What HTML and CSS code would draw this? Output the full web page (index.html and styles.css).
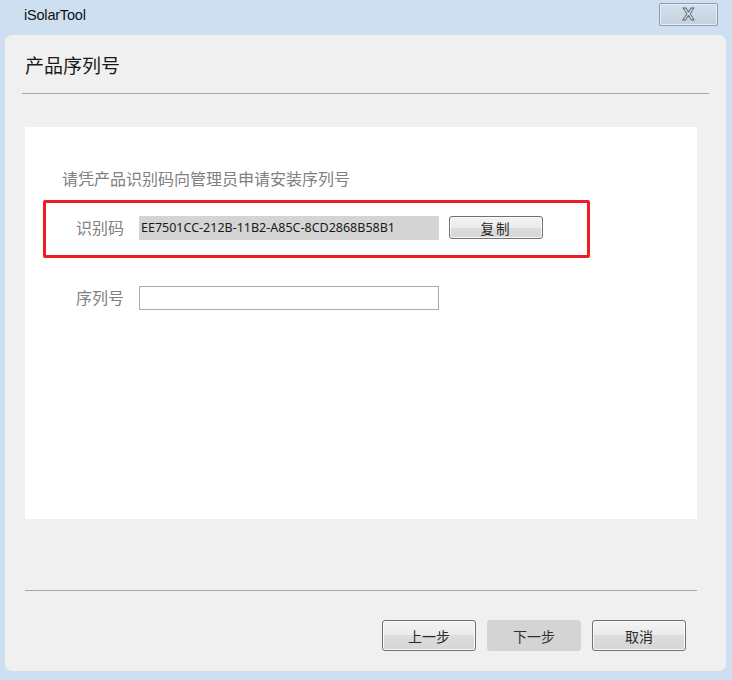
FILE: index.html
```html
<!DOCTYPE html>
<html lang="zh-CN">
<head>
<meta charset="utf-8">
<title>iSolarTool</title>
<link rel="stylesheet" href="styles.css">
</head>
<body>
<div class="window">
  <div class="titlebar">
    <span class="title">iSolarTool</span>
    <button class="close"><span>X</span></button>
  </div>
  <div class="panel">
    <div class="header">产品序列号</div>
    <div class="rule top-rule"></div>
    <div class="content">
      <div class="hint">请凭产品识别码向管理员申请安装序列号</div>
      <div class="highlight">
        <span class="label">识别码</span>
        <div class="field readonly">EE7501CC-212B-11B2-A85C-8CD2868B58B1</div>
        <button class="btn copy">复制</button>
      </div>
      <div class="row">
        <span class="label">序列号</span>
        <div class="field input"></div>
      </div>
    </div>
    <div class="rule bottom-rule"></div>
    <div class="actions">
      <button class="btn action">上一步</button>
      <button class="btn action disabled">下一步</button>
      <button class="btn action">取消</button>
    </div>
  </div>
</div>
</body>
</html>
```
FILE: styles.css
```css
html, body {
  margin: 0;
  padding: 0;
}
body {
  width: 732px;
  height: 680px;
  background: #cddff0;
  font-family: "Noto Sans CJK SC", "Noto Sans", sans-serif;
  overflow: hidden;
}
.window {
  width: 732px;
  height: 680px;
  display: flex;
  flex-direction: column;
}
.titlebar {
  height: 35px;
  display: flex;
  justify-content: space-between;
  align-items: flex-start;
  padding: 0 14px 0 24px;
  box-sizing: border-box;
}
.title {
  font-family: "Liberation Sans", sans-serif;
  font-size: 14.5px;
  line-height: 18px;
  letter-spacing: -0.2px;
  color: #111111;
  margin-top: 6px;
}
.close {
  margin-top: 3px;
  width: 59px;
  height: 23px;
  border: 1px solid #8d9cae;
  border-radius: 2px;
  background: linear-gradient(#d5e0ec, #c3d1e0);
  padding: 0;
  display: flex;
  align-items: center;
  justify-content: center;
  box-shadow: inset 0 0 0 1px #e4ecf5;
}
.close span {
  font-family: "Liberation Sans", sans-serif;
  font-size: 17px;
  font-weight: bold;
  color: #ffffff;
  -webkit-text-stroke: 1px #5d6670;
  line-height: 1;
}
.panel {
  margin: 0 6px 0 5px;
  height: 636px;
  background: #f0f0f0;
  border-radius: 7px;
  display: flex;
  flex-direction: column;
}
.header {
  height: 58px;
  box-sizing: border-box;
  padding: 16px 0 0 20px;
  font-size: 19px;
  line-height: 27px;
  color: #1a1a1a;
}
.rule {
  height: 1px;
  background: #a6a6a6;
}
.top-rule {
  margin: 0 17px;
}
.content {
  margin: 33px 29px 0 20px;
  height: 392px;
  background: #ffffff;
  box-sizing: border-box;
  padding-top: 40px;
}
.hint {
  padding-left: 37px;
  font-size: 16px;
  line-height: 22px;
  color: #808080;
}
.highlight {
  margin: 11px 0 0 18px;
  width: 547px;
  height: 58px;
  box-sizing: border-box;
  border: 3px solid #ee1c25;
  border-radius: 2px;
  display: flex;
  align-items: flex-start;
  padding: 13px 0 0 30px;
}
.label {
  width: 63px;
  font-size: 16px;
  line-height: 22px;
  color: #808080;
  flex: none;
}
.field {
  width: 300px;
  height: 24px;
  box-sizing: border-box;
  flex: none;
}
.readonly {
  background: #d4d4d4;
  font-family: "Noto Sans", sans-serif;
  font-size: 12.5px;
  line-height: 24px;
  padding-left: 2px;
  color: #1a1a1a;
  white-space: nowrap;
}
.input {
  border: 1px solid #ababab;
  background: #ffffff;
}
.btn {
  font-family: "Noto Sans CJK SC", sans-serif;
  color: #2a2a2a;
  border: 1px solid #707070;
  border-radius: 3px;
  background: linear-gradient(#f3f3f3 0%, #ebebeb 50%, #dddddd 50%, #d6d6d6 100%);
  padding: 0;
  box-shadow: inset 0 0 0 1px #fafafa;
}
.copy {
  margin-left: 10px;
  width: 94px;
  height: 23px;
  font-size: 13.5px;
  line-height: 20px;
  letter-spacing: 2px;
}
.row {
  margin-top: 28px;
  padding-left: 51px;
  display: flex;
  align-items: flex-start;
}
.bottom-rule {
  margin: 71px 29px 0 20px;
}
.actions {
  margin-top: 29px;
  padding-right: 40px;
  display: flex;
  justify-content: flex-end;
  gap: 11px;
}
.action {
  width: 94px;
  height: 31px;
  font-size: 14px;
  line-height: 28px;
}
.action.disabled {
  background: #d4d4d4;
  border-color: #d4d4d4;
  box-shadow: none;
  color: #333333;
}
```
